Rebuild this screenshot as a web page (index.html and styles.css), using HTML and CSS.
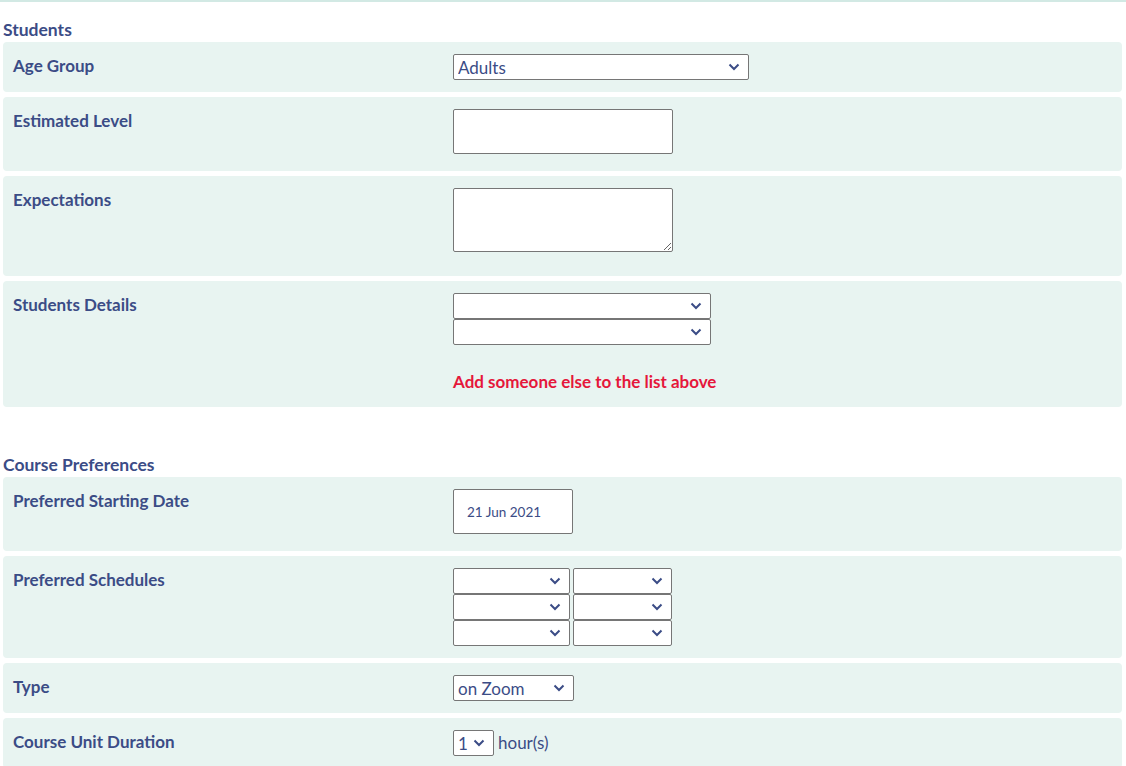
FILE: index.html
```html
<!DOCTYPE html>
<html lang="en">
<head>
  <meta charset="UTF-8" />
  <meta name="viewport" content="width=device-width, initial-scale=1" />
  <title>Course Request</title>
  <link rel="stylesheet" href="styles.css">
</head>
<body>

  <div class="top-line"></div>

  <div class="page">
    <!-- Students section -->
    <h2 class="section-title">Students</h2>

    <div class="field-row">
      <label class="field-label">Age Group</label>
      <div class="field-control">
        <select class="select select-age">
          <option>Adults</option>
        </select>
      </div>
    </div>

    <div class="field-row">
      <label class="field-label">Estimated Level</label>
      <div class="field-control">
        <input type="text" class="text-input input-level" />
      </div>
    </div>

    <div class="field-row">
      <label class="field-label">Expectations</label>
      <div class="field-control">
        <textarea class="text-area"></textarea>
      </div>
    </div>

    <div class="field-row">
      <label class="field-label">Students Details</label>
      <div class="field-control">
        <select class="select select-student"><option></option></select>
        <select class="select select-student"><option></option></select>
        <a href="#" class="add-link">Add someone else to the list above</a>
      </div>
    </div>

    <!-- Course preferences section -->
    <h2 class="section-title section-gap">Course Preferences</h2>

    <div class="field-row">
      <label class="field-label">Preferred Starting Date</label>
      <div class="field-control">
        <input type="text" class="text-input input-date" value="21 Jun 2021" />
      </div>
    </div>

    <div class="field-row">
      <label class="field-label">Preferred Schedules</label>
      <div class="field-control schedule-grid">
        <select class="select select-day"><option></option></select>
        <select class="select select-time"><option></option></select>
        <select class="select select-day"><option></option></select>
        <select class="select select-time"><option></option></select>
        <select class="select select-day"><option></option></select>
        <select class="select select-time"><option></option></select>
      </div>
    </div>

    <div class="field-row">
      <label class="field-label">Type</label>
      <div class="field-control">
        <select class="select select-type">
          <option>on Zoom</option>
        </select>
      </div>
    </div>

    <div class="field-row">
      <label class="field-label">Course Unit Duration</label>
      <div class="field-control inline-control">
        <select class="select select-hours">
          <option>1</option>
        </select>
        <span class="unit">hour(s)</span>
      </div>
    </div>
  </div>

</body>
</html>
```

FILE: styles.css
```css
* {
  margin: 0;
  padding: 0;
  box-sizing: border-box;
}

body {
  font-family: Lato, "Noto Sans", sans-serif;
  font-size: 17px;
  color: #3b4c86;
  background: #fff;
}

.top-line {
  height: 2px;
  background: #d2e9e4;
}

.page {
  padding: 0 4px 0 3px;
}

/* Section headings */
.section-title {
  font-size: 17.5px;
  font-weight: bold;
  line-height: 20px;
  margin-top: 18px;
  margin-bottom: 2px;
}
.section-gap {
  margin-top: 48px;
}

/* One label + control row */
.field-row {
  display: grid;
  grid-template-columns: 440px 1fr;
  padding: 12px 10px;
  margin-bottom: 5px;
  background: #e8f4f1;
  border-radius: 4px;
}
.field-label {
  font-weight: bold;
  line-height: 24px;
}
.field-control {
  display: flex;
  flex-direction: column;
  align-items: flex-start;
}

/* Controls */
.select,
.text-input,
.text-area {
  font-family: inherit;
  font-size: 17px;
  color: #3b4c86;
  background-color: #fff;
  border: 1px solid #767676;
  border-radius: 2px;
}

.select {
  appearance: none;
  -webkit-appearance: none;
  height: 26px;
  padding: 0 24px 0 4px;
  background-image: url("data:image/svg+xml,%3Csvg xmlns='http://www.w3.org/2000/svg' width='12' height='8' viewBox='0 0 12 8'%3E%3Cpath d='M1.5 1.5 6 6l4.5-4.5' fill='none' stroke='%233b4c86' stroke-width='2'/%3E%3C/svg%3E");
  background-repeat: no-repeat;
  background-position: right 8px center;
  background-size: 12px 8px;
}
.select-age { width: 296px; }
.select-student { width: 258px; }
.select-type { width: 121px; }
.select-hours { width: 41px; }

.text-input {
  height: 45px;
  margin-bottom: 5px;
}
.input-level { width: 220px; }
.input-date {
  width: 120px;
  padding-left: 13px;
  font-size: 13.5px;
}

.text-area {
  width: 220px;
  height: 64px;
  margin-bottom: 12px;
  resize: both;
}

.add-link {
  margin-top: 26px;
  margin-bottom: 2px;
  line-height: 22px;
  font-weight: bold;
  color: #e5173b;
  text-decoration: none;
}

.schedule-grid {
  display: grid;
  grid-template-columns: 117px 99px;
  column-gap: 3px;
}
.schedule-grid .select {
  width: 100%;
}

.inline-control {
  flex-direction: row;
  align-items: center;
  gap: 4px;
}
.unit {
  line-height: 26px;
}
```
